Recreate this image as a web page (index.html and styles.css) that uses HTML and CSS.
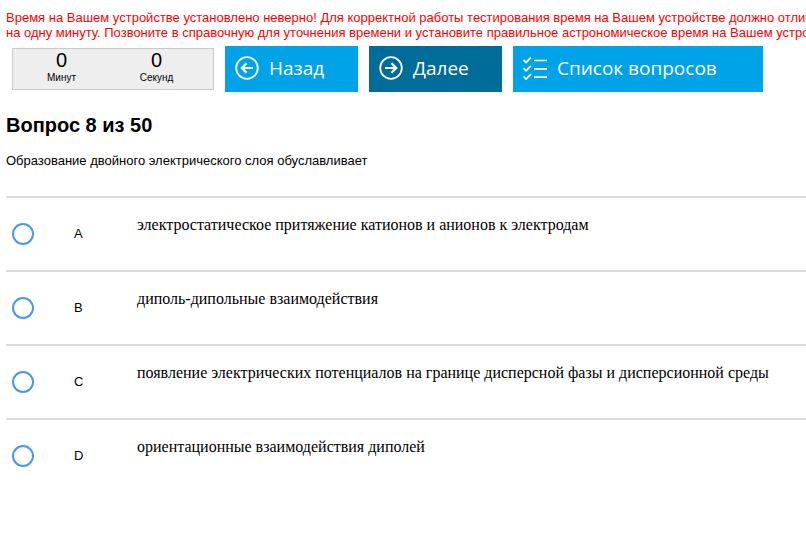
FILE: index.html
```
<!DOCTYPE html>
<html lang="ru">
<head>
    <meta charset="UTF-8">
    <meta name="viewport" content="width=device-width, initial-scale=1.0">
    <title>Тестирование</title>
    <link rel="stylesheet" href="styles.css">
</head>
<body>
    <div class="warning">
        Время на Вашем устройстве установлено неверно! Для корректной работы тестирования время на Вашем устройстве должно отличаться<br>
        на одну минуту. Позвоните в справочную для уточнения времени и установите правильное астрономическое время на Вашем устройстве
    </div>

    <div class="toolbar">
        <div class="timer">
            <div class="timer-cell">
                <span class="timer-value">0</span>
                <span class="timer-label">Минут</span>
            </div>
            <div class="timer-cell">
                <span class="timer-value">0</span>
                <span class="timer-label">Секунд</span>
            </div>
        </div>

        <button type="button" class="btn">
            <svg class="icon" viewBox="0 0 24 24">
                <circle cx="12" cy="12" r="10.8" stroke-width="1.8"/>
                <path d="M18 12H7M11.5 7.2L6.7 12l4.8 4.8" stroke-width="2.2"/>
            </svg>
            Назад
        </button>
        <button type="button" class="btn btn-next">
            <svg class="icon" viewBox="0 0 24 24">
                <circle cx="12" cy="12" r="10.8" stroke-width="1.8"/>
                <path d="M6 12h11M12.5 7.2l4.8 4.8-4.8 4.8" stroke-width="2.2"/>
            </svg>
            Далее
        </button>
        <button type="button" class="btn btn-list">
            <svg class="icon" viewBox="0 0 24 24">
                <path d="M0.5 4l2.5 2.5 5-5M0.5 12.3l2.5 2.5 5-5M0.5 20.6l2.5 2.5 5-5" stroke-width="1.8"/>
                <path d="M11 4.5h13M11 12.8h13M11 21.2h13" stroke-width="1.7"/>
            </svg>
            Список вопросов
        </button>
    </div>

    <h1>Вопрос 8 из 50</h1>
    <p class="question">Образование двойного электрического слоя обуславливает</p>

    <div class="answers">
        <label class="answer">
            <input type="radio" name="answer" value="A">
            <span class="letter">A</span>
            <span class="text">электростатическое притяжение катионов и анионов к электродам</span>
        </label>
        <label class="answer">
            <input type="radio" name="answer" value="B">
            <span class="letter">B</span>
            <span class="text">диполь-дипольные взаимодействия</span>
        </label>
        <label class="answer">
            <input type="radio" name="answer" value="C">
            <span class="letter">C</span>
            <span class="text">появление электрических потенциалов на границе дисперсной фазы и дисперсионной среды</span>
        </label>
        <label class="answer">
            <input type="radio" name="answer" value="D">
            <span class="letter">D</span>
            <span class="text">ориентационные взаимодействия диполей</span>
        </label>
    </div>
</body>
</html>
```
FILE: styles.css
```
body {
    margin: 0;
    padding: 10px 0 0 6px;
    font-family: "Liberation Sans", Arial, sans-serif;
    font-size: 13px;
    line-height: 15px;
    color: #000;
    background-color: #fff;
    overflow-x: hidden;
}
.warning {
    color: #f00;
    white-space: nowrap;
    overflow: hidden;
}
.toolbar {
    display: flex;
    align-items: flex-start;
    gap: 11px;
    margin-top: 6px;
    padding-left: 6px;
}
.timer {
    display: flex;
    box-sizing: border-box;
    width: 202px;
    height: 42px;
    margin-top: 2px;
    padding: 0 9px 0 1px;
    border: 1px solid #c8c8c8;
    background-color: #eee;
}
.timer-cell {
    flex: 1;
    display: flex;
    flex-direction: column;
    align-items: center;
}
.timer-value {
    font-size: 20px;
    line-height: 22px;
}
.timer-label {
    font-size: 10px;
    line-height: 14px;
}
.btn {
    display: flex;
    align-items: center;
    gap: 10px;
    width: 133px;
    height: 46px;
    padding: 0 10px 2px;
    border: none;
    background-color: #00a2e8;
    color: #fff;
    font-family: "Open Sans", "Noto Sans", sans-serif;
    font-size: 19px;
    white-space: nowrap;
    cursor: pointer;
}
.btn-next {
    background-color: #006c9a;
}
.btn-list {
    width: 250px;
}
.icon {
    width: 24px;
    height: 24px;
    flex: none;
    fill: none;
    stroke: #fff;
}
h1 {
    margin: 21px 0 0;
    font-size: 20px;
    line-height: 24px;
}
.question {
    margin: 16px 0 28px;
}
.answer {
    display: flex;
    align-items: center;
    height: 72px;
    border-top: 2px solid #dcdcdc;
    cursor: pointer;
}
.answer input {
    appearance: none;
    width: 22px;
    height: 22px;
    margin: 0 0 0 6px;
    border: 2px solid #4a98e8;
    border-radius: 50%;
    background-color: #fff;
}
.answer input:checked {
    background-color: #4a98e8;
    box-shadow: inset 0 0 0 4px #fff;
}
.letter {
    width: 63px;
    margin-left: 40px;
    padding-bottom: 2px;
}
.text {
    align-self: flex-start;
    padding-top: 18px;
    font-family: "Liberation Serif", "Times New Roman", serif;
    font-size: 16px;
    line-height: 18px;
}
```
